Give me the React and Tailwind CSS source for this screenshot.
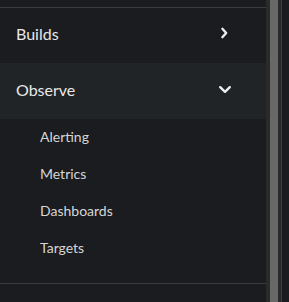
import React from 'react';

const subItems = ['Alerting', 'Metrics', 'Dashboards', 'Targets'];

const Chevron = ({ open }) => (
  <svg width="14" height="12" viewBox="0 0 14 12" fill="none" className="overflow-visible">
    {open ? (
      <path d="M3.2 3.2 L8 7.8 L12.8 3.2" stroke="#ececec" strokeWidth="2.4" strokeLinecap="round" strokeLinejoin="round" />
    ) : (
      <path d="M5.4 0.8 L9.2 5 L5.4 9.2" stroke="#ececec" strokeWidth="2.4" strokeLinecap="round" strokeLinejoin="round" />
    )}
  </svg>
);

const NavRow = ({ label, open }) => (
  <div
    className={`flex items-center justify-between pl-4 pr-[35px] pb-[3px] ${
      open ? 'h-[56px] bg-[#202427]' : 'h-[55px]'
    }`}
  >
    <span className="text-[16px] text-[#e8e8e8]">{label}</span>
    <Chevron open={open} />
  </div>
);

export default function App() {
  return (
    <div className="flex w-[289px] h-[302px] bg-[#1b1c1f] font-['Lato',sans-serif] overflow-hidden">
      <div className="w-[266px] flex flex-col">
        <div className="h-[7px]" />
        <div className="border-t border-[#3a3b3e]">
          <NavRow label="Builds" />
          <NavRow label="Observe" open />
          <div className="flex flex-col pb-4">
            {subItems.map((item) => (
              <div key={item} className="h-[37px] flex items-center pl-10 pb-[3px]">
                <span className="text-[14px] text-[#d6d6d6]">{item}</span>
              </div>
            ))}
          </div>
        </div>
        <div className="border-t border-[#3a3b3e]" />
      </div>
      <div className="w-[4px] bg-[#2a2a2b]" />
      <div className="w-[8px] bg-[#686868]" />
      <div className="w-[3px] bg-[#2a2a2b]" />
      <div className="w-[1px] bg-[#3c3c3e]" />
      <div className="flex-1 bg-[#1b1c1f]" />
    </div>
  );
}
